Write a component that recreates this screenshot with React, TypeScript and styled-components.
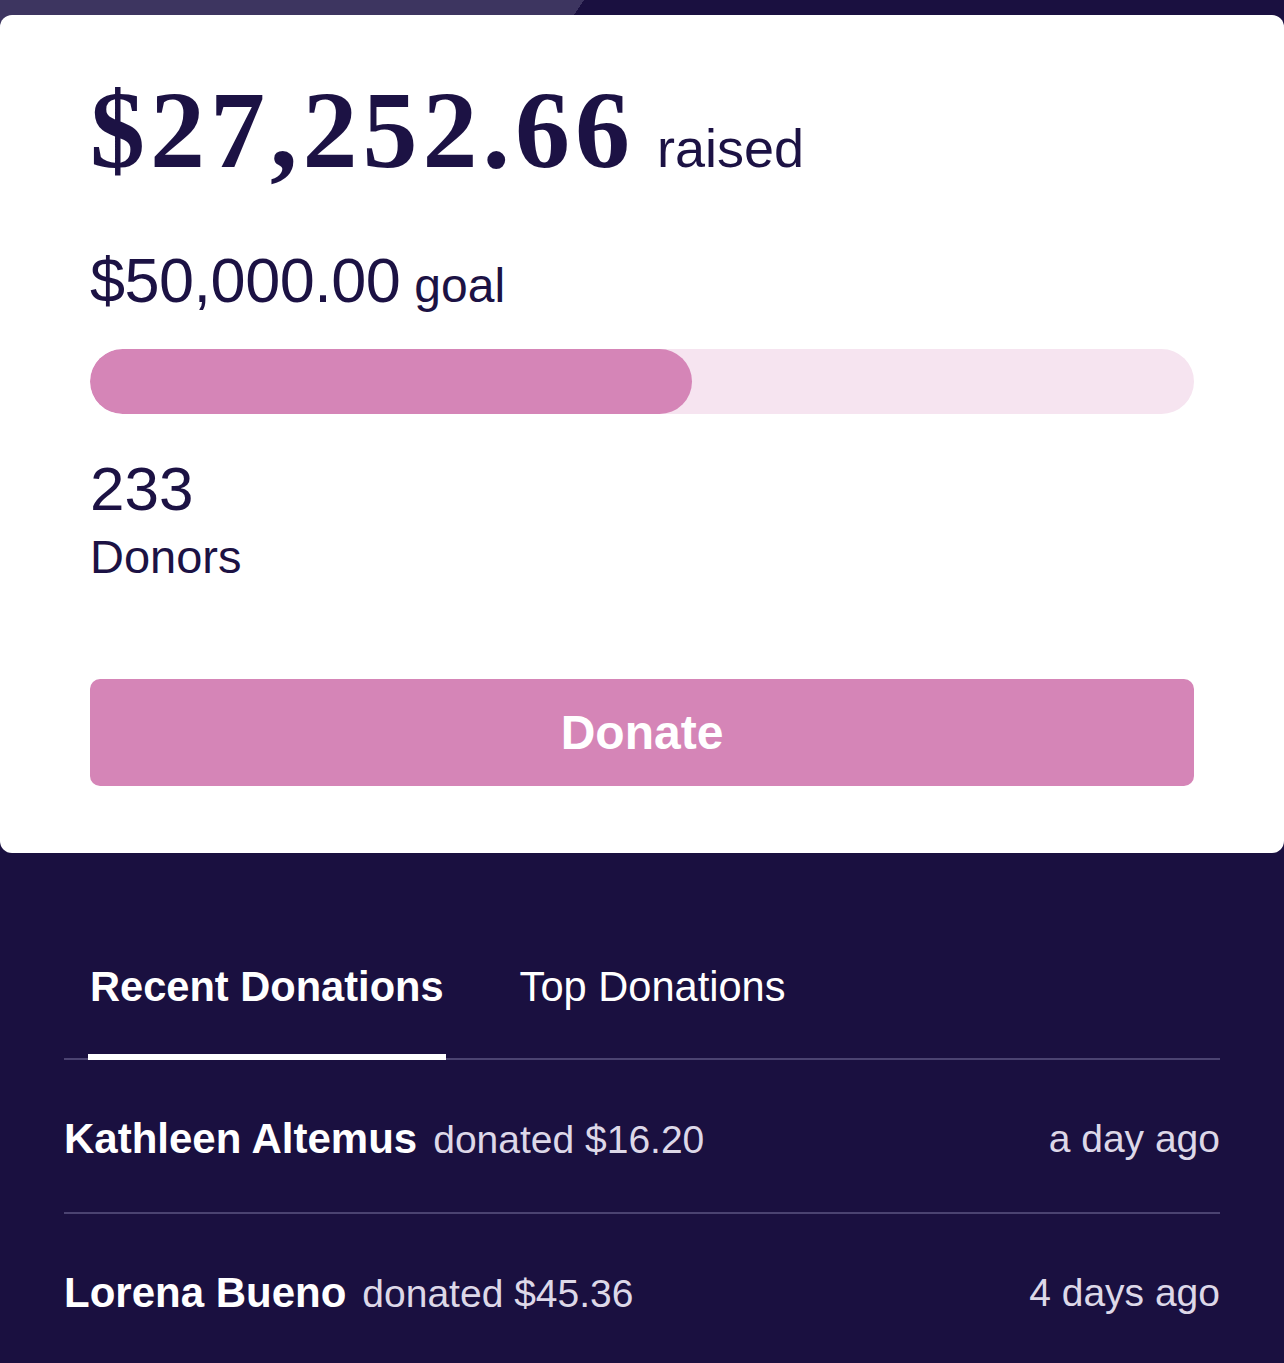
import React, { useState } from 'react';
import styled, { createGlobalStyle } from 'styled-components';

const GlobalStyle = createGlobalStyle`
  html, body {
    margin: 0;
    padding: 0;
    background: #1a1040;
  }
  body {
    font-family: 'Liberation Sans', Arial, sans-serif;
    -webkit-font-smoothing: antialiased;
  }
  * {
    box-sizing: border-box;
  }
`;

const Page = styled.div`
  min-height: 1363px;
  background: #1a1040;
`;

// strip of the hero picture that peeks out above the card
const TopStrip = styled.div`
  height: 27px;
  background: linear-gradient(123.7deg, #3d3560 486px, #1a1040 486px);
`;

const Card = styled.section`
  position: relative;
  margin-top: -12px;
  background: #ffffff;
  border-radius: 12px;
  padding: 60px 90px 67px;
  color: #1c1244;
`;

const AmountRow = styled.div`
  display: flex;
  align-items: baseline;
  gap: 22px;
`;

const Raised = styled.span`
  font-family: 'Liberation Serif', 'Times New Roman', serif;
  font-weight: 700;
  font-size: 110px;
  line-height: 1;
  letter-spacing: 5px;
`;

const Label = styled.span<{ $size: number }>`
  font-size: ${(p) => p.$size}px;
  line-height: 1;
`;

const GoalRow = styled.div`
  display: flex;
  align-items: baseline;
  gap: 14px;
  margin-top: 64px;
`;

const GoalAmount = styled.span`
  font-size: 63px;
  line-height: 1;
  letter-spacing: -0.5px;
`;

const Track = styled.div`
  margin-top: 37px;
  height: 65px;
  border-radius: 33px;
  background: #f6e4f0;
  overflow: hidden;
`;

const Fill = styled.div`
  height: 100%;
  border-radius: 33px;
  background: #d585b7;
`;

const DonorCount = styled.div`
  margin-top: 44px;
  font-size: 62px;
  line-height: 1;
`;

const DonorLabel = styled.div`
  margin-top: 13px;
  font-size: 47px;
  line-height: 1;
`;

const DonateButton = styled.button`
  display: block;
  width: 100%;
  margin-top: 99px;
  height: 107px;
  border: none;
  border-radius: 10px;
  background: #d585b7;
  color: #ffffff;
  font-family: 'Liberation Sans', Arial, sans-serif;
  font-weight: 700;
  font-size: 48px;
  cursor: pointer;
`;

const Feed = styled.section`
  padding: 113px 64px 0;
`;

const TabBar = styled.div`
  display: flex;
  gap: 72px;
  padding-left: 24px;
  border-bottom: 2px solid #4b4371;
`;

const Tab = styled.button<{ $active: boolean }>`
  background: none;
  border: none;
  border-bottom: 6px solid ${(p) => (p.$active ? '#ffffff' : 'transparent')};
  margin-bottom: -2px;
  padding: 0 2px 46px;
  color: #ffffff;
  font-family: 'Liberation Sans', Arial, sans-serif;
  font-weight: ${(p) => (p.$active ? 700 : 400)};
  font-size: 41.6px;
  line-height: 1;
  cursor: pointer;
`;

const Row = styled.div`
  display: flex;
  align-items: center;
  justify-content: space-between;
  padding: 58px 0 52px;
  border-bottom: 2px solid #4b4371;
  line-height: 1;
`;

const Who = styled.div`
  display: flex;
  align-items: baseline;
  gap: 16px;
`;

const Name = styled.span`
  color: #ffffff;
  font-weight: 700;
  font-size: 42px;
`;

const Muted = styled.span`
  color: #ddd8e8;
  font-size: 39px;
`;

const donations = [
  { name: 'Kathleen Altemus', amount: '$16.20', when: 'a day ago' },
  { name: 'Lorena Bueno', amount: '$45.36', when: '4 days ago' },
];

export default function App() {
  const [tab, setTab] = useState<'recent' | 'top'>('recent');
  const raised = 27252.66;
  const goal = 50000;
  const pct = Math.min(100, (raised / goal) * 100);

  return (
    <Page>
      <GlobalStyle />
      <TopStrip />
      <Card>
        <AmountRow>
          <Raised>$27,252.66</Raised>
          <Label $size={54}>raised</Label>
        </AmountRow>
        <GoalRow>
          <GoalAmount>$50,000.00</GoalAmount>
          <Label $size={48}>goal</Label>
        </GoalRow>
        <Track>
          <Fill style={{ width: `${pct}%` }} />
        </Track>
        <DonorCount>233</DonorCount>
        <DonorLabel>Donors</DonorLabel>
        <DonateButton>Donate</DonateButton>
      </Card>
      <Feed>
        <TabBar>
          <Tab $active={tab === 'recent'} onClick={() => setTab('recent')}>
            Recent Donations
          </Tab>
          <Tab $active={tab === 'top'} onClick={() => setTab('top')}>
            Top Donations
          </Tab>
        </TabBar>
        {donations.map((d) => (
          <Row key={d.name}>
            <Who>
              <Name>{d.name}</Name>
              <Muted>donated {d.amount}</Muted>
            </Who>
            <Muted>{d.when}</Muted>
          </Row>
        ))}
      </Feed>
    </Page>
  );
}
